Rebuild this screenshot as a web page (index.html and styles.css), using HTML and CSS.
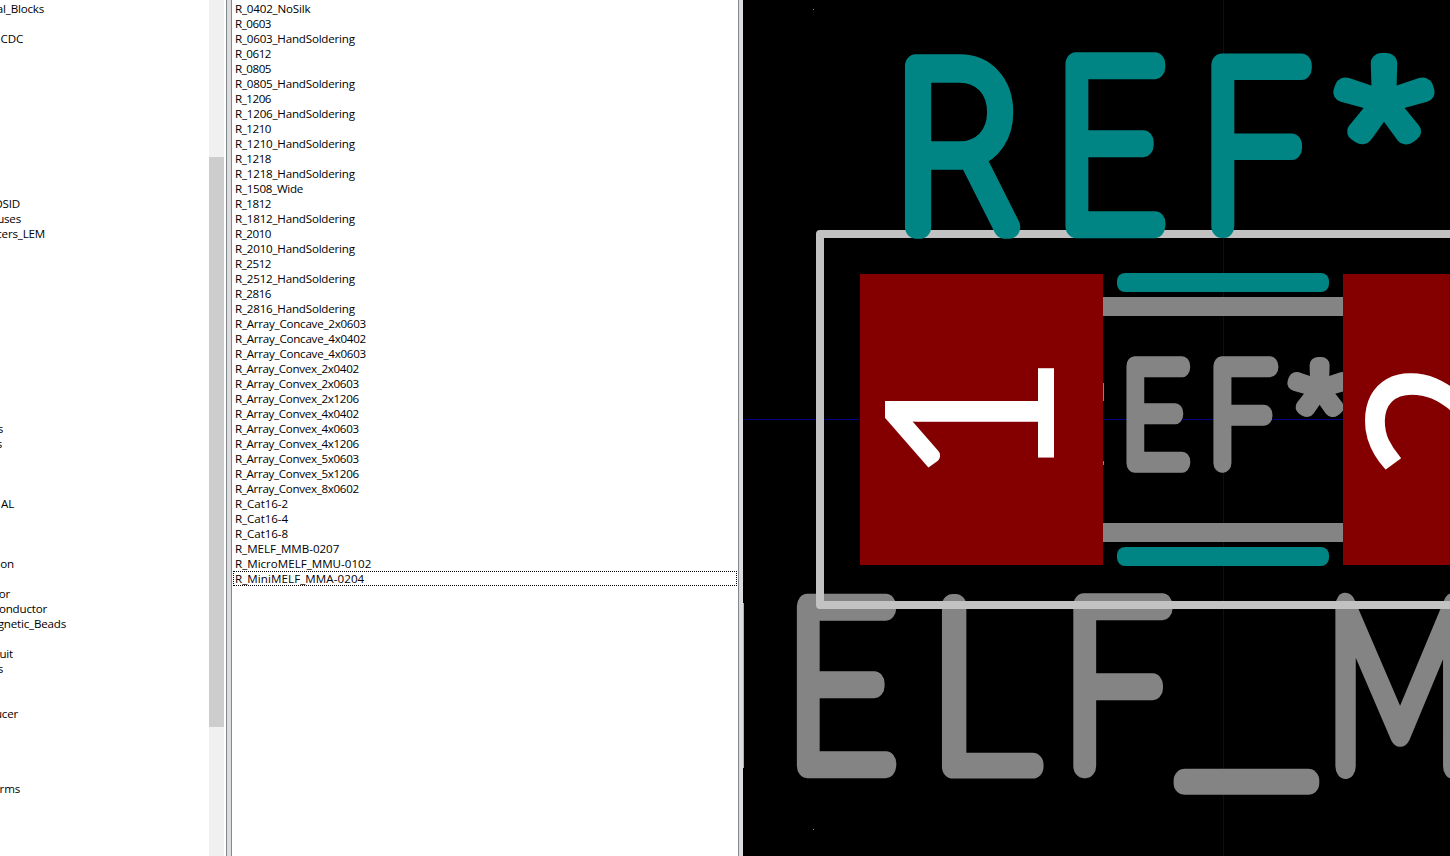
FILE: index.html
```html
<!DOCTYPE html>
<html lang="en">
<head>
<meta charset="utf-8">
<title>Footprint Viewer</title>
<link rel="stylesheet" href="styles.css">
</head>
<body>
<div class="viewer">
  <section class="pane libraries">
    <ul class="lib-list" id="libs"></ul>
    <div class="scrollbar"><div class="thumb"></div></div>
  </section>
  <div class="sash"></div>
  <section class="pane footprints">
    <ul class="fp-list" id="footprints"></ul>
  </section>
  <div class="sash"></div>
  <main class="board">
    <svg class="canvas" viewBox="743 0 707 856" width="707" height="856">
      <path class="axis" d="M1223.5 0V856M743 419.5H1450"/>
      <g id="fab"></g>
      <path class="fab-line" d="M1100 306.5H1345M1100 532.5H1345"/>
      <path class="fab-edge" d="M1103.5 383V401M1103.5 461V465"/>
      <rect class="pad" x="860" y="274" width="243" height="291"/>
      <rect class="pad" x="1343" y="274" width="120" height="291"/>
      <rect class="silk-line" x="1117" y="273" width="212" height="19" rx="8"/>
      <rect class="silk-line" x="1117" y="547" width="212" height="19" rx="8"/>
      <path class="courtyard" d="M1460 234H820V605H1460"/>
      <g id="silk"></g>
      <g id="numbers"></g>
      <path class="grid-dot" d="M813 9h1v1h-1zM813 829h1v1h-1z"/>
      <path class="edge" d="M743 603h1v165h-1z"/>
    </svg>
  </main>
</div>
<script src="app.js"></script>
</body>
</html>
```
FILE: styles.css
```css
* { box-sizing: border-box; }
body {
  margin: 0;
  overflow: hidden;
  background: #fff;
  color: #000;
  font: 11.6px/15px "Open Sans", "Noto Sans", sans-serif;
}
.viewer { display: flex; height: 856px; width: 1450px; overflow: hidden; }
.pane { display: flex; background: #fff; overflow: hidden; }
.libraries { width: 227px; border-right: 1px solid #828790; padding-right: 2px; }
.footprints { width: 508px; border: solid #828790; border-width: 0 1px; }
.sash { width: 4px; background: #dcdcdc; }
.lib-list, .fp-list { flex: 1; margin: 0; padding: 1px 0 0; list-style: none; white-space: pre; }
.lib-list { overflow: hidden; }
.lib-list li { height: 15px; display: flex; justify-content: flex-end; letter-spacing: -0.2px; }
.fp-list { padding-left: 1px; padding-right: 1px; }
.fp-list li { height: 15px; padding-left: 2px; }
.fp-list .focused { outline: 1px dotted #000; outline-offset: -1px; }
.scrollbar { width: 15px; background: #f0f0f0; padding-top: 157px; }
.thumb { height: 570px; background: #cdcdcd; }
.board { flex: 1; background: #000; }
.canvas { display: block; }
.axis { stroke: #000084; fill: none; shape-rendering: crispEdges; }
.fab-line { stroke: #848484; stroke-width: 19; }
.fab-edge { stroke: #848484; }
.pad { fill: #840000; }
.silk-line { fill: #008484; }
.courtyard { fill: none; stroke: #c2c2c2; stroke-width: 8; stroke-linejoin: round; }
.grid-dot { fill: #848484; }
.edge { fill: #b0b0b0; }
.glyph { vector-effect: non-scaling-stroke; stroke-linejoin: round; stroke-linecap: round; }
.silk { fill: #008484; stroke: #008484; stroke-width: 22.5px; }
.silk-star { fill: #008484; stroke: #008484; stroke-width: 20.5px; }
.fab { fill: #848484; stroke: #848484; stroke-width: 22.5px; }
.fab-small { fill: #848484; stroke: #848484; stroke-width: 18px; }
.fab-star { fill: #848484; stroke: #848484; stroke-width: 16.5px; }
.number { fill: #fff; }
.number-wide { fill: #fff; stroke: #fff; stroke-width: 3.5px; stroke-linejoin: miter; }
```
FILE: app.js
```javascript
// Visible library names: row -> [label, right edge]
const libs = {
  0: ['al_Blocks', 44], 2: ['CDC', 23], 13: ['OSID', 20], 14: ['uses', 21],
  15: ['cers_LEM', 45], 28: ['s', 3], 29: ['s', 2], 33: ['AL', 14], 37: ['on', 14],
  39: ['or', 10], 40: ['onductor', 47], 41: ['gnetic_Beads', 66], 43: ['uit', 13],
  44: ['s', 3], 47: ['ucer', 18], 52: ['rms', 20]
};
const libList = document.getElementById('libs');
for (let row = 0; row < 57; row++) {
  const li = document.createElement('li');
  if (libs[row]) {
    li.textContent = libs[row][0];
    li.style.width = libs[row][1] + 'px';
  }
  libList.append(li);
}

const names = ['R_0402_NoSilk', 'R_0603', 'R_0603_HandSoldering', 'R_0612', 'R_0805',
  'R_0805_HandSoldering', 'R_1206', 'R_1206_HandSoldering', 'R_1210', 'R_1210_HandSoldering',
  'R_1218', 'R_1218_HandSoldering', 'R_1508_Wide', 'R_1812', 'R_1812_HandSoldering', 'R_2010',
  'R_2010_HandSoldering', 'R_2512', 'R_2512_HandSoldering', 'R_2816', 'R_2816_HandSoldering',
  'R_Array_Concave_2x0603', 'R_Array_Concave_4x0402', 'R_Array_Concave_4x0603',
  'R_Array_Convex_2x0402', 'R_Array_Convex_2x0603', 'R_Array_Convex_2x1206',
  'R_Array_Convex_4x0402', 'R_Array_Convex_4x0603', 'R_Array_Convex_4x1206',
  'R_Array_Convex_5x0603', 'R_Array_Convex_5x1206', 'R_Array_Convex_8x0602',
  'R_Cat16-2', 'R_Cat16-4', 'R_Cat16-8', 'R_MELF_MMB-0207', 'R_MicroMELF_MMU-0102',
  'R_MiniMELF_MMA-0204'];
const widths = [[/Hand/, 119.8], [/Concave/, 131], [/Convex/, 123.8], [/NoSilk/, 75.3], [/Wide/, 68],
  [/Cat/, 53], [/MMB/, 104.3], [/MMU/, 136.3], [/MMA/, 129.3], [/./, 36]];
const ctx = document.createElement('canvas').getContext('2d');
ctx.font = '11.6px "Open Sans"';
const fpList = document.getElementById('footprints');
for (const name of names) {
  const li = document.createElement('li');
  const target = widths.find(([re]) => re.test(name))[1];
  li.textContent = name;
  li.style.letterSpacing = ((target - ctx.measureText(name).width) / name.length).toFixed(3) + 'px';
  fpList.append(li);
}
fpList.lastElementChild.classList.add('focused');

// Fits one character's ink into the box x0..x1, y0..y1.
function glyph(layer, char, cls, font, x0, y0, x1, y1, rotated) {
  const size = 200;
  ctx.font = font.replace('SIZE', size + 'px');
  const m = ctx.measureText(char);
  const left = -m.actualBoundingBoxLeft, right = m.actualBoundingBoxRight;
  const top = -m.actualBoundingBoxAscent, bottom = m.actualBoundingBoxDescent;
  const w = right - left, h = bottom - top;
  const t = document.createElementNS('http://www.w3.org/2000/svg', 'text');
  t.textContent = char;
  t.setAttribute('class', 'glyph ' + cls);
  t.style.font = ctx.font;
  let tf;
  if (rotated) {
    const sx = (y1 - y0) / w, sy = (x1 - x0) / h;
    tf = `translate(${x0 - top * sy} ${y1 + left * sx}) rotate(-90) scale(${sx} ${sy})`;
  } else {
    const sx = (x1 - x0) / w, sy = y1 === y0 ? sx : (y1 - y0) / h;
    tf = `translate(${x0 - left * sx} ${y0 - top * sy}) scale(${sx} ${sy})`;
  }
  t.setAttribute('transform', tf);
  document.getElementById(layer).append(t);
}
const thin = '100 SIZE Lato', star = '100 SIZE "Noto Sans"';
glyph('silk', 'R', 'silk', '100 SIZE Inter', 915, 64.5, 1009.5, 226.5);
glyph('silk', 'E', 'silk', thin, 1075.5, 64, 1156, 226);
glyph('silk', 'F', 'silk', thin, 1221.5, 65, 1301.5, 227.5);
glyph('silk', '*', 'silk-star', star, 1343.5, 62.5, 1424.5, 134.5);
glyph('fab', 'E', 'fab-small', thin, 1134.5, 366, 1182.5, 463);
glyph('fab', 'F', 'fab-small', thin, 1221.5, 365.5, 1270, 463.5);
glyph('fab', '*', 'fab-star', star, 1295.5, 365, 1343.5, 409);
glyph('fab', 'E', 'fab', thin, 807, 604.5, 887, 766);
glyph('fab', 'L', 'fab', thin, 952.5, 604, 1032.5, 766.5);
glyph('fab', 'F', 'fab', thin, 1083.5, 605, 1162.5, 767);
glyph('fab', '_', 'fab', thin, 1183.5, 778.5, 1308.5, 778.5);
glyph('fab', 'M', 'fab', thin, 1344.5, 605, 1454, 766);
glyph('numbers', '1', 'number', '400 SIZE Lato', 885, 368, 1054, 468, true);
glyph('numbers', '2', 'number-wide', '400 SIZE "Open Sans"', 1367, 368, 1534, 470, true);
```
